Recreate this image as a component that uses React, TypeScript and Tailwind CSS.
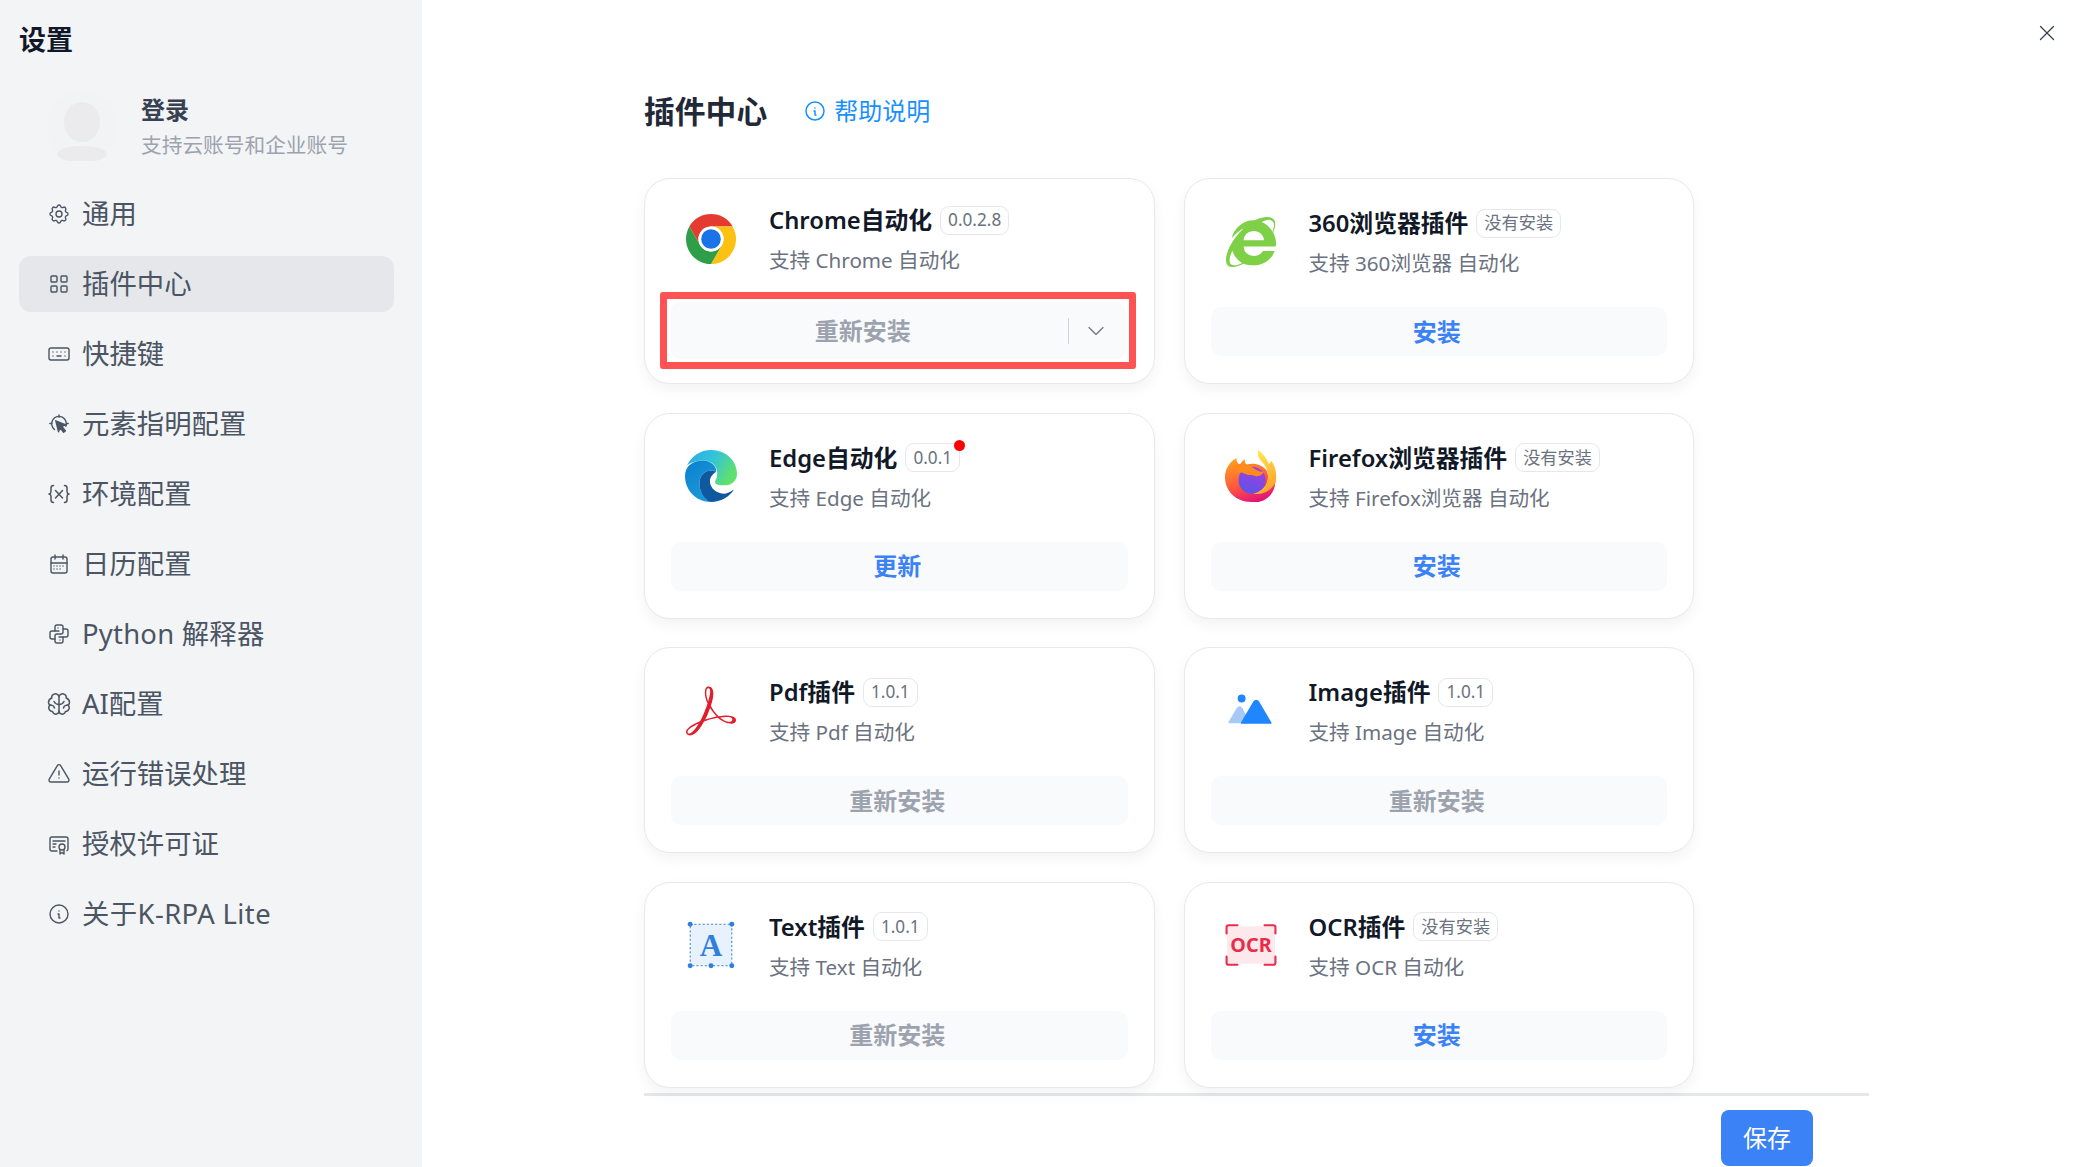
import React from 'react';
import { TbSettings, TbLayoutGrid, TbKeyboard, TbCalendarMonth, TbBrandPython, TbAlertTriangle, TbCertificate, TbInfoCircle, TbChevronDown, TbX } from 'react-icons/tb';
import { FaInternetExplorer } from 'react-icons/fa';
import { SiAdobeacrobatreader } from 'react-icons/si';

const Pointer = () => (
  <svg viewBox="0 0 24 24" className="h-[22px] w-[22px]" fill="none" stroke="currentColor" strokeWidth="1.500" strokeLinecap="round" strokeLinejoin="round">
    <path d="M12 2v2.500M2 11.500h2M20 11.500h2" />
    <path d="M7 18a8 8 0 1 1 12.500-3.500" />
    <path d="M8.500 8.500l11 4.500-4.500 1.500 4 5-2 1.500-4-5-1.500 4.500z" fill="currentColor" />
  </svg>
);

const Braces = () => (
  <svg viewBox="0 0 24 24" className="h-[24px] w-[24px]" fill="none" stroke="currentColor" strokeWidth="1.500" strokeLinecap="round" strokeLinejoin="round">
    <path d="M6.500 3.500C4.500 3.500 4 4.500 4 6v3.500C4 11 3.300 11.700 2 12c1.300.3 2 1 2 2.500V18c0 1.500.5 2.500 2.500 2.500" />
    <path d="M17.500 3.500c2 0 2.500 1 2.500 2.500v3.500c0 1.500.7 2.200 2 2.500-1.300.3-2 1-2 2.500V18c0 1.500-.5 2.500-2.500 2.500" />
    <path d="M8.500 8.500l7 7.500M15.500 8.500l-7 7.500" />
  </svg>
);

const Brain = () => (
  <svg viewBox="0 0 24 24" className="h-[24px] w-[24px]" fill="none" stroke="currentColor" strokeWidth="1.500" strokeLinecap="round" strokeLinejoin="round">
    <path d="M12 4.500C11.500 2.500 9.500 1.500 7.500 2C5.500 2.500 4.500 4 4.800 6C2.800 6.700 1.500 8.300 1.500 10.500C1.500 11.500 2 12.500 3 13C1.800 14 1.500 15.500 2 17C2.600 18.500 4 19.500 5.500 19.500C6 21.500 8 22.500 9.500 22C11 21.700 12 20.500 12 19V4.500Z" />
    <path d="M12 4.500C12.500 2.500 14.500 1.500 16.500 2C18.500 2.500 19.500 4 19.200 6C21.200 6.700 22.500 8.300 22.500 10.500C22.500 11.500 22 12.500 21 13C22.200 14 22.500 15.500 22 17C21.400 18.500 20 19.500 18.500 19.500C18 21.500 16 22.500 14.500 22C13 21.700 12 20.500 12 19" />
    <path d="M12 12.500C10 12.500 8 11.500 7 9.500M12 12.500C14 12.500 16 11.500 17 9.500M3 13C5 13 7 14 7.500 16M21 13C19 13 17 14 16.500 16" />
  </svg>
);

const Chrome = () => (
  <svg viewBox="-26 -26 52 52" className="h-[52px] w-[52px]">
    {[['#e53a2f', 0], ['#fdc112', 120], ['#2f9e48', 240]].map(([c, r]) => (
      <path key={String(r)} d="M-21.650 -12.500A25 25 0 0 1 21.650 -12.500L0 -12.500A12.500 12.500 0 0 0 -10.830 6.250Z" fill={String(c)} transform={`rotate(${r})`} />
    ))}
    <circle r="12.500" fill="#fff" />
    <circle r="9.800" fill="#1a73e8" />
  </svg>
);

const Edge = () => (
  <svg viewBox="0 0 50 50" className="h-[52px] w-[52px]">
    <defs>
      <linearGradient id="edgeTop" x1="0" y1="0" x2="1" y2="0.500">
        <stop offset="0" stopColor="#2aa9dc" />
        <stop offset="0.500" stopColor="#33c3dc" />
        <stop offset="1" stopColor="#5fe06f" />
      </linearGradient>
      <linearGradient id="edgeBlue" x1="0" y1="0" x2="0.600" y2="1">
        <stop offset="0" stopColor="#0d7fd0" />
        <stop offset="1" stopColor="#1a9bd8" />
      </linearGradient>
    </defs>
    <path d="M2 15C6 6 15 0 25 0C40 0 50 11 50 23C50 30 44 34 38 34C33 34 28 33 29 30C30 28 31 26 31 22C31 15 25 10 18 10C11 10 5 12 2 15Z" fill="url(#edgeTop)" />
    <path d="M25 50C10 50 0 38 0 25C0 15 8 10 17 10C25 10 31 16 30 21C23 17 15 22 14 30C13 38 18 47 25 50Z" fill="url(#edgeBlue)" />
    <path d="M14 30C15 22 23 17 30 21C27 23 24 26 24 30C24 37 31 42 38 42C41 42 44 40 47 38C43 45 34 50 25 50C18 48 13 38 14 30Z" fill="#0f5a9e" />
  </svg>
);

const Firefox = () => (
  <svg viewBox="0 0 50 50" className="h-[52px] w-[52px]">
    <defs>
      <linearGradient id="ffBody" x1="0.200" y1="0" x2="0.600" y2="1">
        <stop offset="0" stopColor="#ffa01f" />
        <stop offset="0.550" stopColor="#ff5a3c" />
        <stop offset="1" stopColor="#e3127b" />
      </linearGradient>
      <linearGradient id="ffFlame" x1="0.300" y1="0" x2="0.700" y2="1">
        <stop offset="0" stopColor="#ffe84d" />
        <stop offset="1" stopColor="#ff9d2a" />
      </linearGradient>
      <linearGradient id="ffCore" x1="0.700" y1="0" x2="0.300" y2="1">
        <stop offset="0" stopColor="#a53cdc" />
        <stop offset="1" stopColor="#5b55e8" />
      </linearGradient>
    </defs>
    <path d="M11 8C11 11 12 13 14 14C16 12 17 10 19 9C19 11 19 13 21 14C28 12 36 14 40 20C44 28 40 38 30 40C38 42 46 36 48 28C49 34 47 41 41 46C36 50 30 51 25 50C11 50 0 40 0 26C0 18 5 11 11 8Z" fill="url(#ffBody)" />
    <circle cx="26" cy="29" r="13" fill="url(#ffCore)" />
    <path d="M32 0C31 5 32 8 36 12C40 16 42 22 41 28C40 36 34 41 27 42C37 44 46 38 49 30C50 22 48 14 44 10C44 12 43 13 42 13C40 8 36 3 32 0Z" fill="url(#ffFlame)" />
    <path d="M6 16C12 12 22 13 27 17C31 20 34 21 37 21C36 24 33 26 29 25C27 24 26 24 24 24C22 24 20 23 17 22C14 21 10 23 8 23C11 21 12 20 13 19C10 18 8 17 6 16Z" fill="#ff8a1e" />
  </svg>
);

const Pdf = () => <SiAdobeacrobatreader className="h-[50px] w-[50px] text-[#e11d2a]" />;

const ImageIcon = () => (
  <svg viewBox="0 0 50 50" className="h-[52px] w-[52px]">
    <circle cx="16" cy="13" r="3.800" fill="#1f86ff" />
    <path d="M4 36L12 22.500C13.500 20.500 15 21 16 22.500L23 36Z" fill="#a7c9f7" stroke="#a7c9f7" strokeWidth="1.500" strokeLinejoin="round" />
    <path d="M16 36.500L28 16C29 14.500 31 14.500 32 16L44 36.500Z" fill="#1f86ff" stroke="#1f86ff" strokeWidth="1.500" strokeLinejoin="round" />
  </svg>
);

const TextIcon = () => (
  <svg viewBox="0 0 50 50" className="h-[52px] w-[52px]">
    <rect x="5" y="5" width="40" height="40" fill="#e8f2fd" stroke="#3b82d6" strokeWidth="1" strokeDasharray="2 2" />
    {[[5, 5], [45, 5], [5, 45], [45, 45], [25, 45]].map(([x, y]) => (
      <circle key={`${x}-${y}`} cx={x} cy={y} r="2.400" fill="#2f7fe0" />
    ))}
    <text x="25" y="36" textAnchor="middle" fontFamily="'Liberation Serif', serif" fontWeight="700" fontSize="30" fill="#2f7fe0">A</text>
  </svg>
);

const OcrIcon = () => (
  <svg viewBox="0 0 50 50" className="h-[52px] w-[52px]">
    <rect x="2" y="7" width="46" height="36" fill="#fde8ec" />
    <path d="M12 6H3.500A2 2 0 0 0 1.500 8V14M38 6H46.500A2 2 0 0 1 48.500 8V14M12 44H3.500A2 2 0 0 1 1.500 42V36M38 44H46.500A2 2 0 0 0 48.500 42V36" fill="none" stroke="#ea2c4b" strokeWidth="2" strokeLinecap="round" />
    <text x="25" y="32" textAnchor="middle" fontFamily="'Noto Sans', sans-serif" fontWeight="700" fontSize="19" fill="#ea2c4b">OCR</text>
  </svg>
);

const Ie = () => <FaInternetExplorer className="h-[50px] w-[50px] text-[#7ed047]" />;

type Plugin = {
  name: string;
  badge: string;
  desc: string;
  icon: React.ReactNode;
  action: string;
  primary?: boolean;
  dot?: boolean;
  highlighted?: boolean;
};

const plugins: Plugin[] = [
  { name: 'Chrome自动化', badge: '0.0.2.8', desc: '支持 Chrome 自动化', icon: <Chrome />, action: '重新安装', highlighted: true },
  { name: '360浏览器插件', badge: '没有安装', desc: '支持 360浏览器 自动化', icon: <Ie />, action: '安装', primary: true },
  { name: 'Edge自动化', badge: '0.0.1', desc: '支持 Edge 自动化', icon: <Edge />, action: '更新', primary: true, dot: true },
  { name: 'Firefox浏览器插件', badge: '没有安装', desc: '支持 Firefox浏览器 自动化', icon: <Firefox />, action: '安装', primary: true },
  { name: 'Pdf插件', badge: '1.0.1', desc: '支持 Pdf 自动化', icon: <Pdf />, action: '重新安装' },
  { name: 'Image插件', badge: '1.0.1', desc: '支持 Image 自动化', icon: <ImageIcon />, action: '重新安装' },
  { name: 'Text插件', badge: '1.0.1', desc: '支持 Text 自动化', icon: <TextIcon />, action: '重新安装' },
  { name: 'OCR插件', badge: '没有安装', desc: '支持 OCR 自动化', icon: <OcrIcon />, action: '安装', primary: true },
];

const iconCls = 'h-[24px] w-[24px] stroke-[1.4]';
const menu: { label: string; icon: React.ReactNode; active?: boolean; track?: string }[] = [
  { label: '通用', icon: <TbSettings className={iconCls} /> },
  { label: '插件中心', icon: <TbLayoutGrid className={iconCls} />, active: true },
  { label: '快捷键', icon: <TbKeyboard className={iconCls} /> },
  { label: '元素指明配置', icon: <Pointer /> },
  { label: '环境配置', icon: <Braces /> },
  { label: '日历配置', icon: <TbCalendarMonth className={iconCls} /> },
  { label: 'Python 解释器', icon: <TbBrandPython className={iconCls} />, track: 'tracking-[0.25px]' },
  { label: 'AI配置', icon: <Brain /> },
  { label: '运行错误处理', icon: <TbAlertTriangle className={iconCls} /> },
  { label: '授权许可证', icon: <TbCertificate className={iconCls} /> },
  { label: '关于K-RPA Lite', icon: <TbInfoCircle className={iconCls} />, track: 'tracking-[0.4px]' },
];

function Card({ p }: { p: Plugin }) {
  return (
    <div className="flex h-[206px] flex-col rounded-[26px] border border-[#e8e9ec] bg-white px-[26px] shadow-[0_6px_14px_rgba(0,0,0,0.05)]">
      <div className={`flex items-center ${p.highlighted ? 'mt-[23px]' : 'mt-[26px]'}`}>
        <div className="ml-[14px] flex w-[52px] shrink-0 justify-center">{p.icon}</div>
        <div className="ml-[32px]">
          <div className="flex h-[36px] items-center">
            <span className="text-[23.800px] font-semibold leading-[32px] text-[#111827]">{p.name}</span>
            <span className="relative ml-[8px] flex h-[29px] items-center rounded-[9px] border border-[#e5e7eb] px-[7px] text-[17.200px] text-[#6b7280]">
              {p.badge}
              {p.dot && <span className="absolute right-[-6px] top-[-4px] h-[11px] w-[11px] rounded-full bg-[#ff0000]" />}
            </span>
          </div>
          <div className="mt-[7px] text-[20.600px] leading-[30px] text-[#6b7280]">{p.desc}</div>
        </div>
      </div>
      {p.highlighted ? (
        <div className="-ml-[11px] -mr-[8px] mt-[17px] box-border h-[77px] rounded-[3px] border-[7px] border-[#ff5252] bg-white p-[3px]">
          <div className="flex h-[57px] items-center rounded-[10px] bg-[#f9fafb] pr-[16px]">
            <span className="flex-1 pr-[12px] text-center text-[24px] font-semibold text-[#9ca3af]">{p.action}</span>
            <span className="h-[26px] border-l border-[#d1d5db]" />
            <TbChevronDown className="ml-[13px] h-[28px] w-[28px] stroke-[1] text-[#6b7280]" />
          </div>
        </div>
      ) : (
        <div className="mt-auto mb-[27px] flex h-[49px] items-center justify-center rounded-[10px] bg-[#f9fafb] pr-[4px] text-[24px] font-semibold">
          <span className={p.primary ? 'text-[#3b82f6]' : 'text-[#9ca3af]'}>{p.action}</span>
        </div>
      )}
    </div>
  );
}

export default function App() {
  return (
    <div className="flex h-[1167px] w-[2076px] overflow-hidden bg-white font-['Noto_Sans','Noto_Sans_CJK_SC',sans-serif]">
      <aside className="flex w-[422px] shrink-0 flex-col bg-[#f3f4f6] pl-[19px] pr-[28px]">
        <h1 className="mt-[20px] text-[27px] font-bold leading-[39px] text-[#111827]">设置</h1>
        <div className="mt-[32px] flex items-center pl-[28px]">
          <svg viewBox="0 0 70 70" className="h-[70px] w-[70px] shrink-0">
            <circle cx="35" cy="35" r="35" fill="#f2f3f4" />
            <ellipse cx="35" cy="31" rx="18" ry="20" fill="#ebeaec" />
            <ellipse cx="35" cy="63" rx="25" ry="8" fill="#ebeaec" />
          </svg>
          <div className="ml-[24px]">
            <div className="text-[24px] font-semibold leading-[34px] text-[#374151]">登录</div>
            <div className="mt-[3px] text-[20.700px] leading-[30px] text-[#9ca3af]">支持云账号和企业账号</div>
          </div>
        </div>
        <nav className="mt-[25px] flex flex-col gap-[14px]">
          {menu.map(m => (
            <div key={m.label} className={`flex h-[56px] items-center rounded-[12px] pl-[28px] text-[27.400px] text-[#4b5563] ${m.active ? 'bg-[#e5e7eb]' : ''}`}>
              <span className="flex w-[24px] justify-center">{m.icon}</span>
              <span className={`ml-[11px] ${m.track ?? ''}`}>{m.label}</span>
            </div>
          ))}
        </nav>
      </aside>
      <main className="relative flex min-w-0 flex-1 flex-col pl-[222px]">
        <TbX className="absolute right-[16px] top-[20px] h-[26px] w-[26px] stroke-[1.200] text-[#374151]" />
        <div className="w-[1225px]">
          <div className="mt-[88px] flex h-[46px] items-center">
            <h2 className="text-[30.800px] font-bold text-[#1f2937]">插件中心</h2>
            <a className="ml-[36px] flex items-center text-[24px] text-[#1890ff]">
              <TbInfoCircle className="h-[24px] w-[24px] stroke-[1.500]" />
              <span className="ml-[7px]">帮助说明</span>
            </a>
          </div>
          <div className="mt-[44px] grid w-[1050px] grid-cols-2 gap-x-[29px] gap-y-[28.600px]">
            {plugins.map(p => <Card key={p.name} p={p} />)}
          </div>
          <div className="mt-[5px] border-t-[3px] border-[#e5e7eb]" />
          <div className="mt-[14px] flex justify-end pr-[56px]">
            <button className="h-[56px] w-[92px] rounded-[8px] bg-[#3b82f6] text-[24px] text-white">保存</button>
          </div>
        </div>
      </main>
    </div>
  );
}
